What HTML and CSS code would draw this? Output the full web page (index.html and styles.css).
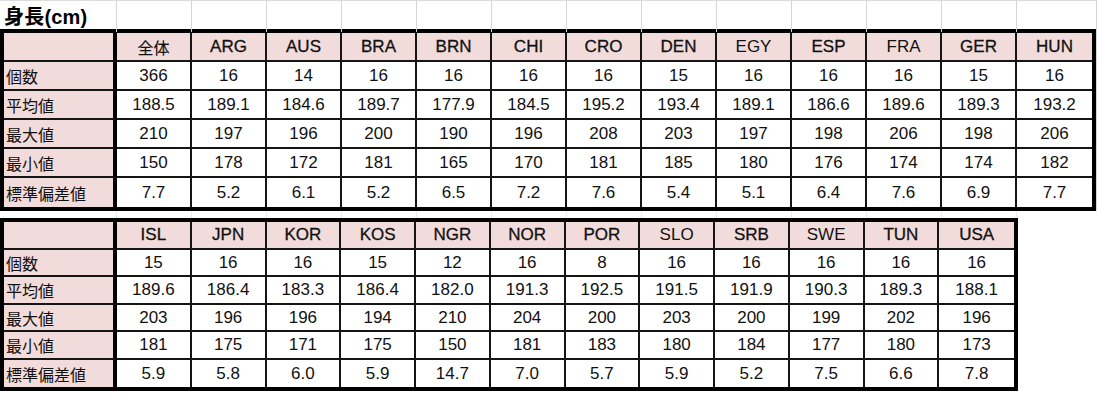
FILE: index.html
```html
<!DOCTYPE html>
<html lang="ja">
<head>
<meta charset="utf-8">
<title>身長(cm)</title>
<link rel="stylesheet" href="styles.css">
</head>
<body>
<div class="sheet">
  <div class="block1">
    <div class="toprow">
      <div class="tcell title">身長(cm)</div>
      <div class="tcell"></div><div class="tcell"></div><div class="tcell"></div><div class="tcell"></div><div class="tcell"></div><div class="tcell"></div><div class="tcell"></div><div class="tcell"></div><div class="tcell"></div><div class="tcell"></div><div class="tcell"></div><div class="tcell"></div><div class="tcell"></div>
    </div>
    <div class="tbl t1">
      <div class="c lab"></div>
      <div class="c hd jp">全体</div><div class="c hd">ARG</div><div class="c hd">AUS</div><div class="c hd">BRA</div><div class="c hd">BRN</div><div class="c hd">CHI</div><div class="c hd">CRO</div><div class="c hd">DEN</div><div class="c hd lt">EGY</div><div class="c hd">ESP</div><div class="c hd lt">FRA</div><div class="c hd">GER</div><div class="c hd">HUN</div>

      <div class="c lab">個数</div>
      <div class="c">366</div><div class="c">16</div><div class="c">14</div><div class="c">16</div><div class="c">16</div><div class="c">16</div><div class="c">16</div><div class="c">15</div><div class="c">16</div><div class="c">16</div><div class="c">16</div><div class="c">15</div><div class="c">16</div>

      <div class="c lab">平均値</div>
      <div class="c">188.5</div><div class="c">189.1</div><div class="c">184.6</div><div class="c">189.7</div><div class="c">177.9</div><div class="c">184.5</div><div class="c">195.2</div><div class="c">193.4</div><div class="c">189.1</div><div class="c">186.6</div><div class="c">189.6</div><div class="c">189.3</div><div class="c">193.2</div>

      <div class="c lab">最大値</div>
      <div class="c">210</div><div class="c">197</div><div class="c">196</div><div class="c">200</div><div class="c">190</div><div class="c">196</div><div class="c">208</div><div class="c">203</div><div class="c">197</div><div class="c">198</div><div class="c">206</div><div class="c">198</div><div class="c">206</div>

      <div class="c lab">最小値</div>
      <div class="c">150</div><div class="c">178</div><div class="c">172</div><div class="c">181</div><div class="c">165</div><div class="c">170</div><div class="c">181</div><div class="c">185</div><div class="c">180</div><div class="c">176</div><div class="c">174</div><div class="c">174</div><div class="c">182</div>

      <div class="c lab">標準偏差値</div>
      <div class="c">7.7</div><div class="c">5.2</div><div class="c">6.1</div><div class="c">5.2</div><div class="c">6.5</div><div class="c">7.2</div><div class="c">7.6</div><div class="c">5.4</div><div class="c">5.1</div><div class="c">6.4</div><div class="c">7.6</div><div class="c">6.9</div><div class="c">7.7</div>
    </div>
  </div>

  <div class="gaprow">
    <div class="gcell first"></div><div class="gcell"></div><div class="gcell"></div><div class="gcell"></div><div class="gcell"></div><div class="gcell"></div><div class="gcell"></div><div class="gcell"></div><div class="gcell"></div><div class="gcell"></div><div class="gcell"></div><div class="gcell"></div><div class="gcell"></div>
  </div>

  <div class="tbl t2">
    <div class="c lab"></div>
    <div class="c hd">ISL</div><div class="c hd">JPN</div><div class="c hd">KOR</div><div class="c hd">KOS</div><div class="c hd">NGR</div><div class="c hd">NOR</div><div class="c hd">POR</div><div class="c hd lt">SLO</div><div class="c hd">SRB</div><div class="c hd lt">SWE</div><div class="c hd">TUN</div><div class="c hd">USA</div>

    <div class="c lab">個数</div>
    <div class="c">15</div><div class="c">16</div><div class="c">16</div><div class="c">15</div><div class="c">12</div><div class="c">16</div><div class="c">8</div><div class="c">16</div><div class="c">16</div><div class="c">16</div><div class="c">16</div><div class="c">16</div>

    <div class="c lab">平均値</div>
    <div class="c">189.6</div><div class="c">186.4</div><div class="c">183.3</div><div class="c">186.4</div><div class="c">182.0</div><div class="c">191.3</div><div class="c">192.5</div><div class="c">191.5</div><div class="c">191.9</div><div class="c">190.3</div><div class="c">189.3</div><div class="c">188.1</div>

    <div class="c lab">最大値</div>
    <div class="c">203</div><div class="c">196</div><div class="c">196</div><div class="c">194</div><div class="c">210</div><div class="c">204</div><div class="c">200</div><div class="c">203</div><div class="c">200</div><div class="c">199</div><div class="c">202</div><div class="c">196</div>

    <div class="c lab">最小値</div>
    <div class="c">181</div><div class="c">175</div><div class="c">171</div><div class="c">175</div><div class="c">150</div><div class="c">181</div><div class="c">183</div><div class="c">180</div><div class="c">184</div><div class="c">177</div><div class="c">180</div><div class="c">173</div>

    <div class="c lab">標準偏差値</div>
    <div class="c">5.9</div><div class="c">5.8</div><div class="c">6.0</div><div class="c">5.9</div><div class="c">14.7</div><div class="c">7.0</div><div class="c">5.7</div><div class="c">5.9</div><div class="c">5.2</div><div class="c">7.5</div><div class="c">6.6</div><div class="c">7.8</div>
  </div>
</div>
</body>
</html>
```

FILE: styles.css
```css
* { box-sizing: border-box; }

html, body {
  margin: 0;
  padding: 0;
  background: #ffffff;
}

body {
  font-family: "Liberation Sans", "Noto Sans CJK JP", sans-serif;
  color: #111;
  font-size: 17px;
}

.sheet {
  width: 1104px;
}

.block1 {
  width: 1097px;
  border-right: 1px solid #d4d4d4;
}

/* top spreadsheet row with the title */
.toprow {
  display: grid;
  grid-template-columns: 117px repeat(13, 75px);
  height: 29px;
  border-top: 1px solid #dcdcdc;
}

.tcell {
  border-right: 1px solid #d6d6d6;
}

.tcell:last-child {
  border-right: 0;
}

.title {
  font-family: "Liberation Sans", "Noto Sans CJK JP", sans-serif;
  font-weight: bold;
  font-size: 20px;
  color: #000;
  padding-left: 4px;
  padding-bottom: 2px;
  display: flex;
  align-items: center;
  letter-spacing: 0.2px;
}

/* gap row between the tables */
.gaprow {
  display: grid;
  grid-template-columns: 117px repeat(12, 75px);
  height: 7px;
}

.gcell {
  border-right: 1px solid #ececec;
}

/* tables */
.tbl {
  display: grid;
  border: 4px solid #000;
  width: max-content;
}

.t1 {
  grid-template-columns: 113px repeat(13, 75px);
  grid-auto-rows: 29px;
}

.t2 {
  grid-template-columns: 113px repeat(12, 74.75px);
  grid-auto-rows: 27.5px;
}

.c {
  display: flex;
  align-items: center;
  justify-content: center;
  border-right: 2px solid #151515;
  border-bottom: 2px solid #151515;
  background: #fff;
  color: #111;
  white-space: nowrap;
  padding-top: 1px;
}

.t1 > .c:nth-child(14n) { border-right: 0; }
.t2 > .c:nth-child(13n) { border-right: 0; }
.t1 > .c:nth-last-child(-n+14) { border-bottom: 0; }
.t2 > .c:nth-last-child(-n+13) { border-bottom: 0; }

.lab {
  justify-content: flex-start;
  border-right: 4px solid #000;
  background: #f2dcdb;
  font-family: "Noto Sans CJK JP", sans-serif;
  font-size: 16px;
  padding-left: 2px;
  color: #111;
}

.hd {
  background: #f2dcdb;
  color: #111;
  -webkit-text-stroke: 0.3px #111;
}

.hd.lt {
  -webkit-text-stroke: 0;
}

.hd.jp {
  font-family: "Noto Sans CJK JP", sans-serif;
  font-size: 16px;
  -webkit-text-stroke: 0.15px #111;
}
```
